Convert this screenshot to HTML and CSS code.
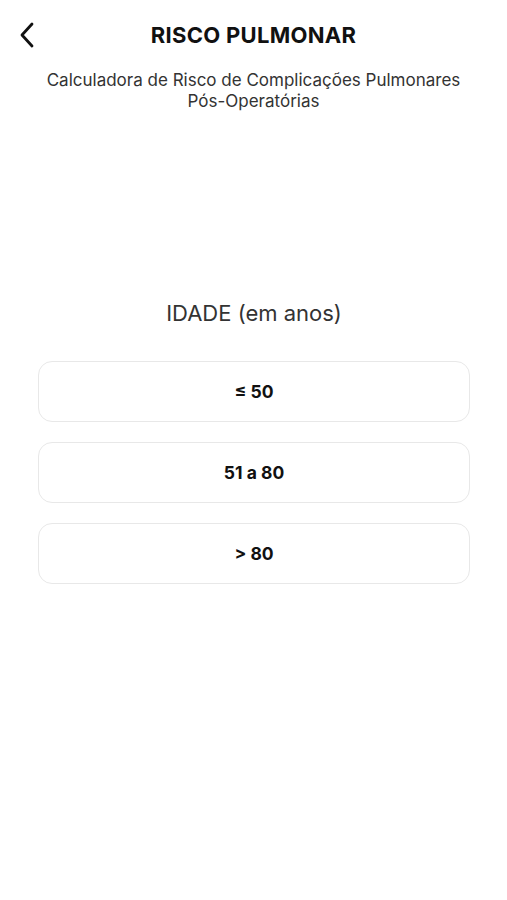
FILE: index.html
```html
<!DOCTYPE html>
<html>
  <head>
    <meta name="viewport" content="width=device-width, initial-scale=1" />
    <link rel="stylesheet" href="styles.css">
  </head>
  <body>
    <header class="top-bar">
      <button class="back-btn" aria-label="Voltar">
        <svg width="16" height="26" viewBox="0 0 16 26">
          <path d="M13 2 L3 13 L13 24" fill="none" stroke="#111" stroke-width="2.8" stroke-linecap="round" stroke-linejoin="round" />
        </svg>
      </button>
      <h1 class="title">RISCO PULMONAR</h1>
    </header>

    <p class="subtitle">Calculadora de Risco de Complicações Pulmonares<br />Pós-Operatórias</p>

    <main class="question">
      <h2 class="question-label">IDADE (em anos)</h2>
      <div class="options">
        <button class="option">≤ 50</button>
        <button class="option">51 a 80</button>
        <button class="option">&gt; 80</button>
      </div>
    </main>
  </body>
</html>
```

FILE: styles.css
```css
* {
  box-sizing: border-box;
}

body {
  margin: 0;
  font-family: Inter, "Noto Sans", Arial, sans-serif;
  background-color: white;
  color: #111;
}

/* Header with back arrow and centered title */
.top-bar {
  position: relative;
  height: 70px;
  display: flex;
  align-items: center;
  justify-content: center;
}

.back-btn {
  position: absolute;
  left: 15px;
  top: 22px;
  padding: 0 4px;
  border: none;
  background: none;
  cursor: pointer;
}

.title {
  margin: 0;
  font-size: 22px;
  font-weight: 700;
  letter-spacing: 0.3px;
}

.subtitle {
  margin: 0;
  text-align: center;
  font-size: 17px;
  line-height: 21px;
  color: #333;
}

/* Question block */
.question {
  padding: 188px 37px 0 38px;
}

.question-label {
  margin: 0 0 35px 0;
  text-align: center;
  font-size: 22px;
  font-weight: 400;
  color: #333;
}

.options {
  display: flex;
  flex-direction: column;
  gap: 20px;
}

.option {
  height: 61px;
  border: 1.5px solid #e8e8e8;
  border-radius: 14px;
  background-color: white;
  font-family: inherit;
  font-size: 17.5px;
  font-weight: 700;
  color: #111;
  cursor: pointer;
}
```
